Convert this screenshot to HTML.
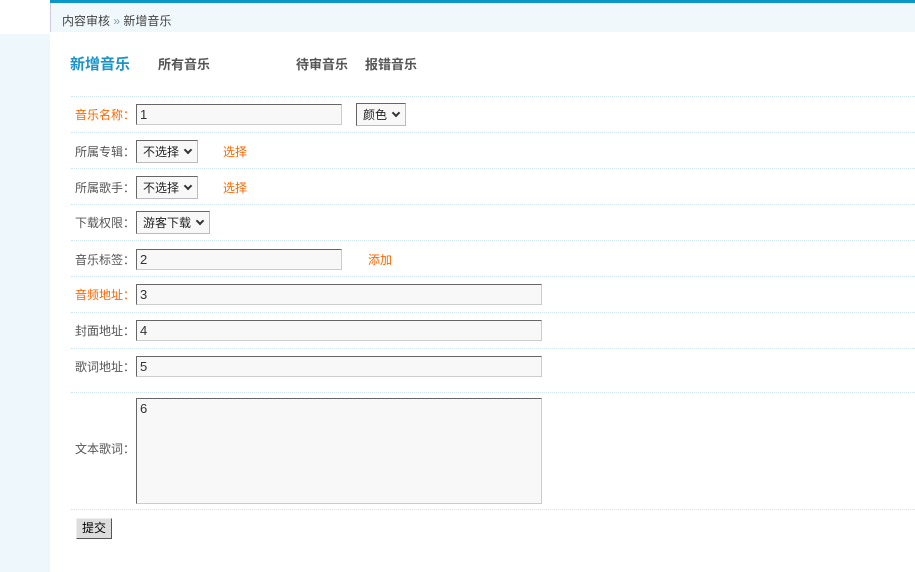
<!DOCTYPE html><html><head><meta charset="utf-8"><style>
body{margin:0;width:915px;height:572px;position:relative;overflow:hidden;background:#fff;font:12px "Liberation Sans","Noto Sans CJK SC",sans-serif;color:#555}
.a{position:absolute;white-space:nowrap}
.sep{position:absolute;left:71px;right:0;border-top:1px dotted #cfe6f2;height:0}
.in{position:absolute;background:#f8f8f8;border:1px solid;border-color:#666 #ccc #ccc #666;box-sizing:border-box;color:#333;font-size:13px;padding:3px 0 0 3px;line-height:14px}
.sel{position:absolute;background:#f8f8f8;border:1px solid;border-color:#666 #bbb #bbb #666;box-sizing:border-box;height:23px;color:#222;padding:4px 0 0 6px;line-height:14px}
.sel:after{content:"";position:absolute;right:6px;top:6px;width:4px;height:4px;border:solid #333;border-width:0 2px 2px 0;transform:rotate(45deg)}
.or{color:#f60}
.lb{position:absolute;left:75px}
</style></head><body>
<div class="a" style="left:0;top:34px;width:50px;height:538px;background:#eef7fb"></div>
<div class="a" style="left:50px;top:0;width:865px;height:3px;background:#0b96c8"></div>
<div class="a" style="left:50px;top:3px;width:865px;height:29px;background:#f0f8fb;border-left:1px solid #ccd"></div>
<div class="a" style="left:62px;top:12px;color:#444;font-size:12px">内容审核 <span style="color:#89a">»</span> 新增音乐</div>
<div class="a" style="left:70px;top:53px;font-size:15px;font-weight:bold;color:#1a93c9">新增音乐</div>
<div class="a" style="left:158px;top:54px;font-size:13px;font-weight:bold;color:#555">所有音乐</div>
<div class="a" style="left:296px;top:54px;font-size:13px;font-weight:bold;color:#555">待审音乐</div>
<div class="a" style="left:365px;top:54px;font-size:13px;font-weight:bold;color:#555">报错音乐</div>
<div class="sep" style="top:96px"></div>
<div class="sep" style="top:132px"></div>
<div class="sep" style="top:168px"></div>
<div class="sep" style="top:204px"></div>
<div class="sep" style="top:240px"></div>
<div class="sep" style="top:276px"></div>
<div class="sep" style="top:312px"></div>
<div class="sep" style="top:348px"></div>
<div class="sep" style="top:392px"></div>
<div class="sep" style="top:509px"></div>
<div class="lb or" style="top:106px">音乐名称：</div>
<div class="in" style="left:136px;top:104px;width:206px;height:21px">1</div>
<div class="sel" style="left:356px;top:103px;width:50px">颜色</div>
<div class="lb" style="top:143px">所属专辑：</div>
<div class="sel" style="left:136px;top:140px;width:62px">不选择</div>
<div class="a or" style="left:223px;top:143px">选择</div>
<div class="lb" style="top:179px">所属歌手：</div>
<div class="sel" style="left:136px;top:176px;width:62px">不选择</div>
<div class="a or" style="left:223px;top:179px">选择</div>
<div class="lb" style="top:214px">下载权限：</div>
<div class="sel" style="left:136px;top:211px;width:74px">游客下载</div>
<div class="lb" style="top:251px">音乐标签：</div>
<div class="in" style="left:136px;top:249px;width:206px;height:21px">2</div>
<div class="a or" style="left:368px;top:251px">添加</div>
<div class="lb or" style="top:286px">音频地址：</div>
<div class="in" style="left:136px;top:284px;width:406px;height:21px">3</div>
<div class="lb" style="top:322px">封面地址：</div>
<div class="in" style="left:136px;top:320px;width:406px;height:21px">4</div>
<div class="lb" style="top:358px">歌词地址：</div>
<div class="in" style="left:136px;top:356px;width:406px;height:21px">5</div>
<div class="lb" style="top:440px">文本歌词：</div>
<div class="in" style="left:136px;top:398px;width:406px;height:106px">6</div>
<div class="a" style="left:76px;top:518px;width:36px;height:21px;box-sizing:border-box;background:#ddd;border:1px solid;border-color:#eee #555 #555 #eee;color:#000;text-align:center;line-height:19px">提交</div>
</body></html>
